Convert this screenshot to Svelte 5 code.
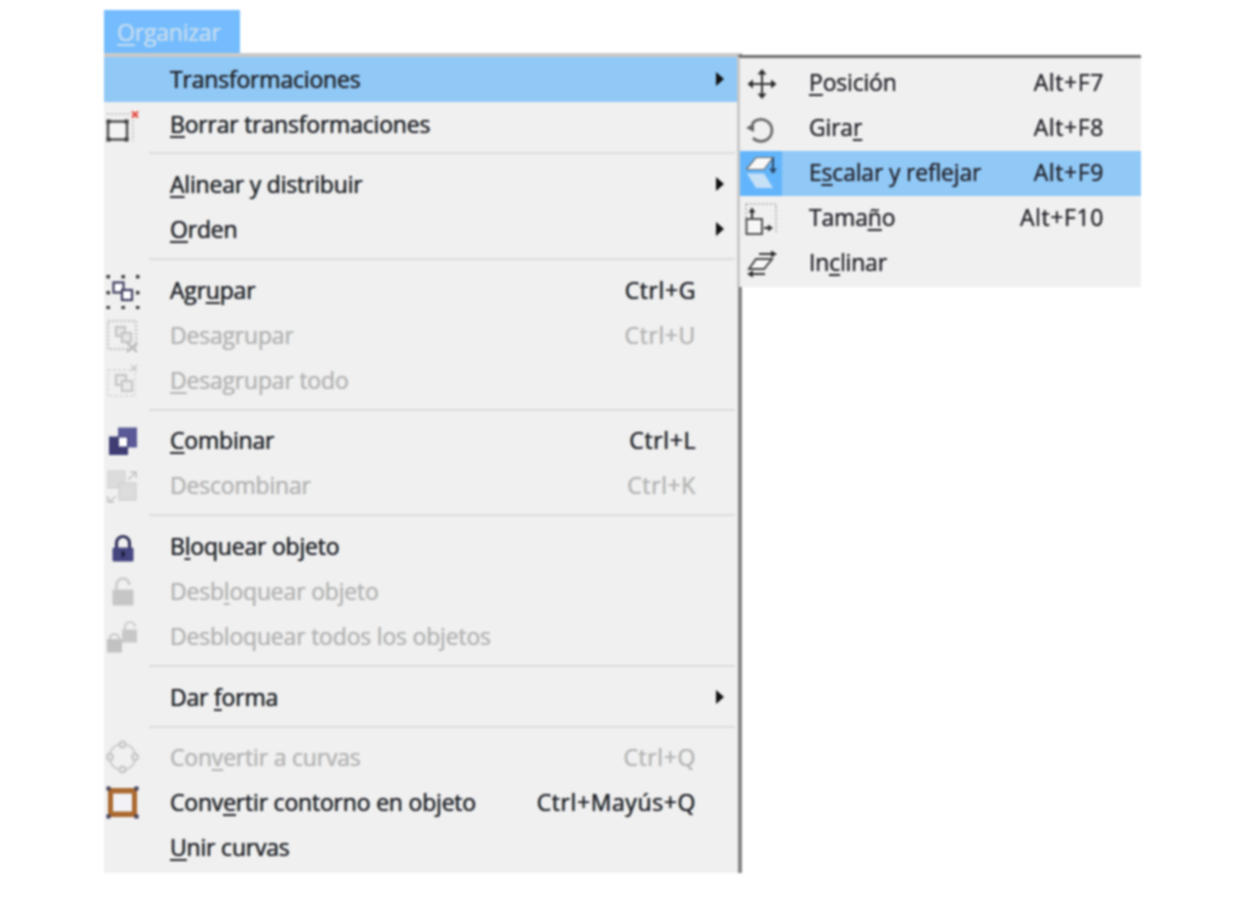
<script>
  const main = [
    [
      { pre: '', mn: '', post: 'Transformaciones', arrow: true, active: true },
      { pre: '', mn: 'B', post: 'orrar transformaciones', icon: 'clear' }
    ],
    [
      { pre: '', mn: 'A', post: 'linear y distribuir', arrow: true },
      { pre: '', mn: 'O', post: 'rden', arrow: true }
    ],
    [
      { pre: 'Agr', mn: 'u', post: 'par', key: 'Ctrl+G', icon: 'group' },
      { pre: 'Desa', mn: 'g', post: 'rupar', key: 'Ctrl+U', icon: 'ungroup', off: true },
      { pre: '', mn: 'D', post: 'esagrupar todo', icon: 'ungroupall', off: true }
    ],
    [
      { pre: '', mn: 'C', post: 'ombinar', key: 'Ctrl+L', icon: 'combine' },
      { pre: '', mn: '', post: 'Descombinar', key: 'Ctrl+K', icon: 'split', off: true }
    ],
    [
      { pre: 'B', mn: 'l', post: 'oquear objeto', icon: 'lock' },
      { pre: 'Desb', mn: 'l', post: 'oquear objeto', icon: 'unlock', off: true },
      { pre: '', mn: '', post: 'Desbloquear todos los objetos', icon: 'unlockall', off: true }
    ],
    [{ pre: 'Dar ', mn: 'f', post: 'orma', arrow: true }],
    [
      { pre: 'Con', mn: 'v', post: 'ertir a curvas', key: 'Ctrl+Q', icon: 'curves', off: true },
      { pre: 'Conv', mn: 'e', post: 'rtir contorno en objeto', key: 'Ctrl+Mayús+Q', icon: 'outline' },
      { pre: '', mn: 'U', post: 'nir curvas' }
    ]
  ];
  const sub = [
    { pre: '', mn: 'P', post: 'osición', key: 'Alt+F7', icon: 'move' },
    { pre: 'Gira', mn: 'r', post: '', key: 'Alt+F8', icon: 'rotate' },
    { pre: 'E', mn: 's', post: 'calar y reflejar', key: 'Alt+F9', icon: 'scale', active: true },
    { pre: 'Tama', mn: 'ñ', post: 'o', key: 'Alt+F10', icon: 'size' },
    { pre: 'In', mn: 'c', post: 'linar', icon: 'skew' }
  ];
</script>

{#snippet label(item)}
  <span class="label">{item.pre}{#if item.mn}<u>{item.mn}</u>{/if}{item.post}</span>
{/snippet}

{#snippet icon(name)}
  <svg class="ico" width="36" height="36" viewBox="0 0 36 36" aria-hidden="true">
    {#if name === 'clear'}
      <path d="M3 7h24M29 9v25" stroke="#b4b4b4" stroke-width="1.4" stroke-dasharray="2 2" fill="none"/>
      <rect x="4" y="14.500" width="19" height="18" fill="#f4f4f4" stroke="#4a4a4a" stroke-width="2.400"/>
      <rect x="2.500" y="12.500" width="4" height="4" fill="#3a3a3a"/><rect x="20.500" y="12.500" width="4" height="4" fill="#3a3a3a"/>
      <rect x="2.500" y="30.500" width="4" height="4" fill="#3a3a3a"/><rect x="20.500" y="30.500" width="4" height="4" fill="#3a3a3a"/>
      <path d="M28 4.500l6 6M34 4.500l-6 6" stroke="#e2473f" stroke-width="2.200"/>
    {:else if name === 'group'}
      <g fill="#333">
        <rect x="2.500" y="2" width="3.400" height="3.400"/><rect x="17.500" y="2" width="3.400" height="3.400"/><rect x="32" y="2" width="3.400" height="3.400"/>
        <rect x="2.500" y="18" width="3.400" height="3.400"/><rect x="32" y="18" width="3.400" height="3.400"/>
        <rect x="2.500" y="33" width="3.400" height="3"/><rect x="17.500" y="33" width="3.400" height="3"/><rect x="32" y="33" width="3.400" height="3"/>
      </g>
      <rect x="9.500" y="9.500" width="10" height="10" fill="#fff" stroke="#3d3d5f" stroke-width="2.200"/>
      <rect x="18" y="17" width="10" height="10" fill="#fff" stroke="#3d3d5f" stroke-width="2.200"/>
    {:else if name === 'ungroup'}
      <rect x="4" y="3" width="28" height="28" fill="none" stroke="#c4c4c4" stroke-width="2.400" stroke-dasharray="2 2"/>
      <rect x="12" y="9" width="9" height="9" fill="#e6e6e6" stroke="#c4c4c4" stroke-width="2.200"/>
      <rect x="18" y="15" width="9" height="9" fill="#e6e6e6" stroke="#c4c4c4" stroke-width="2.200"/>
      <path d="M23 25l10 9M33 25l-10 9" stroke="#b8b8b8" stroke-width="2.200"/>
    {:else if name === 'ungroupall'}
      <rect x="4" y="7" width="27" height="26" fill="none" stroke="#d4d4d4" stroke-width="1.4" stroke-dasharray="3 2"/>
      <rect x="12" y="12" width="10" height="10" fill="#eaeaea" stroke="#c6c6c6" stroke-width="2.200"/>
      <rect x="18" y="18" width="10" height="10" fill="#eaeaea" stroke="#c6c6c6" stroke-width="2.200"/>
      <path d="M27 2l6 6M33 2l-6 6" stroke="#c6c6c6" stroke-width="1.6"/>
    {:else if name === 'combine'}
      <rect x="14" y="4.500" width="19" height="20" fill="#5a5a98"/>
      <rect x="5" y="13.500" width="19" height="18.500" fill="#3d3d74"/>
      <rect x="15" y="14.500" width="8" height="9" fill="#fff"/>
    {:else if name === 'split'}
      <rect x="4" y="3" width="17" height="17" fill="#dcdcdc" stroke="#cfcfcf"/>
      <rect x="15" y="15" width="17" height="17" fill="#dcdcdc" stroke="#c9c9c9"/>
      <path d="M24 12l7-7M26 4h6v6M12 28l-7 6M4 28v6h6" stroke="#c2c2c2" stroke-width="1.6" fill="none"/>
    {:else if name === 'lock'}
      <path d="M12.500 19v-5a6.500 6.500 0 0 1 13 0v5" fill="none" stroke="#36365f" stroke-width="3.200"/>
      <rect x="8.500" y="18.500" width="21" height="14" rx="1.500" fill="#45457f"/>
      <rect x="17.800" y="22.500" width="2.600" height="5" fill="#16162f"/>
    {:else if name === 'unlock'}
      <path d="M12.500 15.500v-4.500a6.500 6.500 0 0 1 13 0" fill="none" stroke="#cdcdcd" stroke-width="2.800"/>
      <rect x="8.500" y="15.500" width="21" height="16" rx="1" fill="#c6c6c6"/>
    {:else if name === 'unlockall'}
      <path d="M21 11v-3a5 5 0 0 1 10 0" fill="none" stroke="#cdcdcd" stroke-width="2.200"/>
      <rect x="18" y="10.500" width="15" height="13" fill="#c8c8c8"/>
      <path d="M6 20v-2a5 5 0 0 1 9 0v2" fill="none" stroke="#cdcdcd" stroke-width="2.200"/>
      <rect x="3" y="20" width="15" height="13.500" fill="#c2c2c2"/>
    {:else if name === 'curves'}
      <circle cx="18.500" cy="17" r="13" fill="none" stroke="#cfcfcf" stroke-width="2.200"/>
      <g fill="#e8e8e8" stroke="#c6c6c6" stroke-width="2">
        <circle cx="18.500" cy="4.500" r="3"/><circle cx="18.500" cy="29.500" r="3"/>
        <circle cx="6" cy="17" r="3"/><circle cx="31" cy="17" r="3"/>
      </g>
    {:else if name === 'outline'}
      <rect x="4" y="3" width="29" height="29" fill="#a9692f"/>
      <rect x="9" y="8.500" width="19" height="18" fill="#f2f2f6"/>
      <g fill="#3e3e58">
        <rect x="2.500" y="1.500" width="4" height="4"/><rect x="30.500" y="1.500" width="4" height="4"/>
        <rect x="2.500" y="29.500" width="4" height="4"/><rect x="30.500" y="29.500" width="4" height="4"/>
      </g>
    {:else if name === 'move'}
      <path d="M18 5v26M5 18h26" stroke="#333" stroke-width="2"/>
      <path d="M18 3l-4.500 5.500h9zM18 33l-4.500-5.500h9zM3.500 18l5.500-4.500v9zM32.500 18l-5.500-4.500v9z" fill="#2b2b2b"/>
    {:else if name === 'rotate'}
      <path d="M8 13A11 11 0 1 1 9 27" fill="none" stroke="#666" stroke-width="2.600"/>
      <path d="M2 17l8-5v9z" fill="#666"/>
    {:else if name === 'scale'}
      <path d="M3 17.500h17l9 14.500H12z" fill="#c6e0f6"/>
      <path d="M3 12.500L12 1.500h17l-9 12H3z" fill="#f8f8f8" stroke="#666" stroke-width="1.200"/>
      <path d="M29 1.500v12" stroke="#2d4566" stroke-width="2"/>
      <path d="M25 12.500h8l-4 5.500z" fill="#2d4566"/>
    {:else if name === 'size'}
      <path d="M2 3h30v30" fill="none" stroke="#aaa" stroke-width="1.600" stroke-dasharray="2 2"/>
      <path d="M2 3v14" fill="none" stroke="#aaa" stroke-width="1.600" stroke-dasharray="2 2"/>
      <rect x="2.500" y="18" width="15.500" height="15" fill="#f6f6f6" stroke="#4f4f4f" stroke-width="2"/>
      <path d="M8 17v-6" stroke="#2b2b2b" stroke-width="2"/><path d="M8 6.500l-3.500 5h7z" fill="#2b2b2b"/>
      <path d="M20 27h5" stroke="#2b2b2b" stroke-width="2"/><path d="M29 27l-5-3.500v7z" fill="#2b2b2b"/>
    {:else if name === 'skew'}
      <path d="M12 13h16l-8 10H5z" fill="#f7f7f7" stroke="#444" stroke-width="2"/>
      <path d="M15 8h13" stroke="#333" stroke-width="2"/><path d="M33 8l-6-3.500v7z" fill="#2b2b2b"/>
      <path d="M8 28h13" stroke="#333" stroke-width="2"/><path d="M3 28l6-3.500v7z" fill="#2b2b2b"/>
    {/if}
  </svg>
{/snippet}

<div class="page">
  <div class="menubar">
    <div class="tab"><u>O</u>rganizar</div>
  </div>
  <div class="stack">
    <div class="menu">
      {#each main as group, g}
        {#if g > 0}<div class="sep"></div>{/if}
        {#each group as item}
          <div class="row" class:active={item.active} class:off={item.off}>
            <span class="slot">{#if item.icon}{@render icon(item.icon)}{/if}</span>
            {@render label(item)}
            <span class="key">{item.key ?? ''}</span>
            <span class="arrowcell">{#if item.arrow}<i class="arrow"></i>{/if}</span>
          </div>
        {/each}
      {/each}
    </div>
    <div class="submenu">
      {#each sub as item}
        <div class="subrow" class:active={item.active}>
          <span class="subslot">{@render icon(item.icon)}</span>
          {@render label(item)}
          <span class="key">{item.key ?? ''}</span>
        </div>
      {/each}
    </div>
  </div>
</div>

<style>
  :global(body) {
    margin: 0;
    background: #fff;
  }
  .page {
    width: 1241px;
    height: 900px;
    padding: 10px 0 0 104px;
    box-sizing: border-box;
    font-family: "Open Sans", "Noto Sans", sans-serif;
    font-size: 23px;
    letter-spacing: -0.2px;
    color: #24242c;
    text-shadow: 0 0 0.8px currentColor;
    filter: blur(0.8px);
  }
  u {
    text-decoration-thickness: 2px;
    text-underline-offset: 3px;
  }
  .menubar {
    height: 43px;
  }
  .tab {
    width: 136px;
    height: 43px;
    box-sizing: border-box;
    padding-left: 13px;
    line-height: 44px;
    background: #74bcfd;
    color: #c4dcf0;
  }
  .stack {
    position: relative;
    width: 638px;
  }
  .menu {
    width: 634px;
    height: 816px;
    box-sizing: content-box;
    background: #f0f0f0;
    border-top: 4px solid #c9c9c9;
    border-right: 4px solid #858585;
  }
  .row {
    display: grid;
    grid-template-columns: 66px 1fr auto 42px;
    align-items: center;
    height: 45px;
    box-sizing: border-box;
    padding-bottom: 2px;
  }
  .row.active {
    background: #90c8f6;
  }
  .row.off {
    color: #b4b4b4;
  }
  .slot {
    display: flex;
    justify-content: flex-start;
    margin-top: 2px;
  }
  .ico {
    display: block;
  }
  .label {
    white-space: nowrap;
  }
  .key {
    white-space: nowrap;
    letter-spacing: 0.6px;
  }
  .arrowcell {
    display: flex;
    padding-left: 20px;
  }
  .arrow {
    display: block;
    width: 0;
    height: 0;
    border-left: 8px solid #111;
    border-top: 7px solid transparent;
    border-bottom: 7px solid transparent;
  }
  .sep {
    height: 15.67px;
    box-sizing: border-box;
    padding-bottom: 3px;
    display: flex;
    align-items: center;
    margin: 0 3px 0 45px;
  }
  .sep::before {
    content: "";
    flex: 1;
    height: 2px;
    background: #dcdcdc;
  }
  .submenu {
    position: absolute;
    left: 633px;
    top: 2px;
    width: 401px;
    padding: 3px 0 1px;
    border-top: 3px solid #6e6e6e;
    border-left: 3px solid #c8c8c8;
    background: #f0f0f0;
    box-sizing: content-box;
  }
  .subrow {
    display: grid;
    grid-template-columns: 69px 1fr auto;
    align-items: center;
    height: 45px;
    box-sizing: border-box;
    padding-right: 37px;
  }
  .subrow .label,
  .subrow .key {
    padding-bottom: 4px;
  }
  .subrow.active {
    background: #90c8f6;
  }
  .subslot {
    display: flex;
    justify-content: center;
    align-self: stretch;
    align-items: center;
    box-sizing: border-box;
    width: 42px;
    padding-left: 2px;
    margin-right: 27px;
  }
  .subrow.active .subslot {
    background: #63b5fb;
  }
</style>
